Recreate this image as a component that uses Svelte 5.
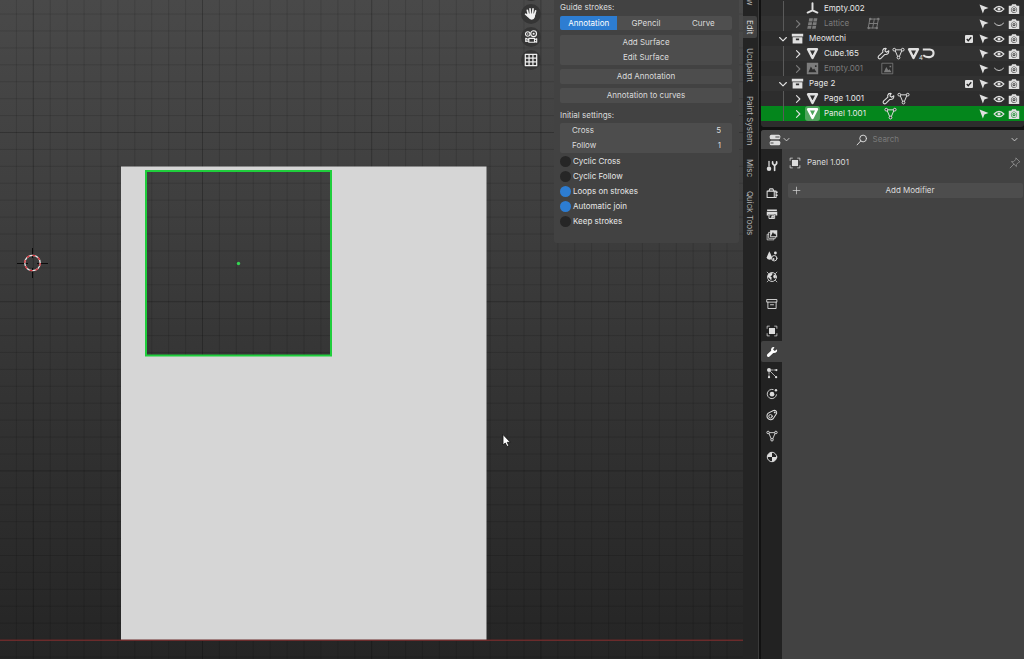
<script>
	// 3D viewport with sidebar on the left, outliner and properties on the right

	const line = 'fill="none" stroke="currentColor" stroke-linecap="round" stroke-linejoin="round"';

	// every icon is drawn on a 16x16 grid
	const icons = {
		zoom: `<circle cx="7" cy="6" r="5" ${line}/>`,
		hand: `<path ${line} stroke-width="1.9" d="M5 8.5L3.8 3.7M7.3 7.5L6.9 2M9.8 7.5L10.3 2.2M12 8.5L13.3 4.3M4.8 10.8L1.8 8.2"/><path fill="currentColor" d="M4 7.5h9l-.6 4.3q-.8 2.8-3.6 2.8-2.5-.2-4-2.6L3 9.5z"/>`,
		movie: `<g ${line} stroke-width="1.3"><circle cx="4.3" cy="4.6" r="2.6"/><circle cx="11" cy="4.2" r="3.3"/><path d="M5.5 9.5h6.500v4.500H5.500zM5.500 11.200L2 9.500v3.500l3.500-.5M12 11l2.500-1v4L12 13"/></g><circle cx="4.300" cy="4.600" r=".8" fill="currentColor"/><circle cx="11" cy="4.200" r="1.200" fill="currentColor"/>`,
		grid: `<path ${line} stroke-width="1.4" d="M1.500 1.500h13v13h-13zM1.500 5.800h13M1.500 10.200h13M5.800 1.500v13M10.200 1.500v13"/>`,
		right: `<path ${line} stroke-width="1.5" d="M6 3.500L10.500 8 6 12.500"/>`,
		down: `<path ${line} stroke-width="1.5" d="M3.500 6L8 10.500 12.500 6"/>`,
		empty: `<path ${line} stroke-width="2.4" d="M8 1.500v8.500M8 10.200L2 13M8 10.200l6 2.800"/>`,
		lattice: `<path fill="currentColor" d="M4 1.500h4.500L8 5.500H3.300zM9.500 1.500H14l-.7 4H9zM3 6.500h4.500L7 10H2.400zM8.700 6.500h4.500l-.6 3.500H8zM2.200 11h4.500l-.5 3.500H1.500zM8 11h4.500l-.7 3.500H7.400z"/>`,
		latticeData: `<path ${line} stroke-width="1.2" d="M4 2.500h10l-2 11H2zM3 8h10M9 2.500L7 13.500"/><g fill="currentColor"><circle cx="4" cy="2.500" r="1.500"/><circle cx="14" cy="2.500" r="1.500"/><circle cx="2" cy="13.500" r="1.500"/><circle cx="12" cy="13.500" r="1.500"/></g>`,
		collection: `<path fill="currentColor" fill-rule="evenodd" d="M1 2h14v3.500H1zM2 6.500h12V14H2zM6 8v2h4V8z"/>`,
		archive: `<path ${line} stroke-width="1.2" d="M1.500 2h13v3.500h-13zM2.500 5.500v8.500h11V5.500M6 9h4"/>`,
		mesh: `<path ${line} stroke-width="3" d="M2.500 2.800h11L8 13.500z"/>`,
		meshData: `<path ${line} stroke-width="1.200" d="M3.500 3.500h9M12.500 3.500L8.500 13h-1L3.500 3.500"/><g fill="#2e2e2e" stroke="currentColor" stroke-width="1.200"><circle cx="2.800" cy="3.300" r="1.700"/><circle cx="13.200" cy="3.300" r="1.700"/><circle cx="8" cy="13" r="1.700"/></g>`,
		image: `<path fill="currentColor" fill-rule="evenodd" d="M1 1h14v14H1zM3 12.500h10L10 8 8.500 9.500 6 5.500zM11 4v2h2V4z"/>`,
		imageData: `<path ${line} d="M1.500 1.500h13v13h-13z"/><path fill="currentColor" d="M3.500 12.500h9.500L10.500 9 9 10 6.500 6zM10.500 4.500h2v2h-2z"/>`,
		wrench: `<path ${line} stroke-width="1.3" d="M14.500 4.500l-2.600 2-2.200-1.700L11.300 1.800Q7.800 1.200 7 4.200L7.200 6.300 1.800 11.300Q.8 13 2.200 14.200q1.400 1 2.600-.3L9.700 9.200Q15 9.600 14.500 4.500z"/>`,
		wrenchSolid: `<path fill="currentColor" d="M14.700 4.300l-3 2.300-2.300-2L11.300 1.600Q7.600.7 6.700 4.300L6.900 6.300 1.700 11Q.5 12.700 2 14.200q1.600 1.200 3.100-.4L9.700 9.300Q15.600 9.600 14.700 4.300z"/>`,
		hook: `<path fill="none" stroke="currentColor" stroke-width="2.6" d="M1 3h8.500q4.700.3 4.700 4.500T9.500 12.500H7.500Q4 12.500 1.500 10"/>`,
		pointer: `<path fill="currentColor" d="M2 2l12 4.500-5.500 2L6.500 14z"/>`,
		eye: `<path ${line} stroke-width="1.6" d="M1.500 8Q8 .8 14.500 8 8 15.200 1.500 8z"/><circle cx="8" cy="8" r="2.100" fill="currentColor"/>`,
		closed: `<path ${line} stroke-width="1.2" d="M2 7q6 6.500 12 0"/>`,
		camera: `<path fill="currentColor" fill-rule="evenodd" d="M1 3.500h3.500l1-2h5l1 2H15v11H1zM8 4.800a4.100 4.100 0 1 0 .01 0z"/><circle cx="8" cy="8.900" r="2.700" ${line} stroke-width="1.5"/><circle cx="8" cy="8.900" r=".9" fill="currentColor"/>`,
		editor: `<rect x="1" y="1" width="14" height="6" rx="2" fill="currentColor"/><rect x="1" y="9" width="14" height="6" rx="2" fill="currentColor"/><path stroke="#484848" stroke-width="1.5" d="M8.500 4H14M2 12h4"/>`,
		search: `<circle cx="9.500" cy="6" r="4.500" ${line} stroke-width="1.3"/><path ${line} stroke-width="1.3" d="M6.300 9.300L1.500 14.500"/>`,
		pin: `<path ${line} stroke-width="1.2" d="M9.500 1.500l5 5-1.700.5-3 3 .1 2.800L3.200 6.200l2.800.1 3-3zM6.500 9.500L1.500 14.500"/>`,
		plus: `<path ${line} stroke-width="1.2" d="M8 2v12M2 8h12"/>`,
		object: `<path fill="currentColor" d="M4 4h8v8H4z"/><path ${line} d="M1.500 4.500v-3h3M11.500 1.500h3v3M14.500 11.500v3h-3M4.500 14.500h-3v-3"/>`,
		tool: `<path ${line} stroke-width="1.7" d="M4 2v6"/><circle cx="4" cy="11.500" r="3" fill="currentColor"/><path ${line} stroke-width="2.200" d="M11.500 7.500V14M8.800 2.500v2.300l2.700 2.700 2.700-2.700V2.500"/>`,
		render: `<path ${line} stroke-width="1.4" d="M1.500 5.500h9.500v8.500H1.500zM4 5l1-2.500h4L10.500 5M13.500 5.500v8.500H11V5.500z"/><path fill="currentColor" d="M13 6h2.500v2H13zM13 10h2.500v2H13z"/>`,
		output: `<path fill="currentColor" d="M1.500 2h13v2h-13zM1 5h14v5h-2.500V8h-9v2H1z"/><path ${line} stroke-width="1.3" d="M4.500 9h7v5h-7z"/><path fill="currentColor" d="M8 10h2.500v3H6z"/>`,
		layers: `<path ${line} d="M3.500 7H1.500v7.500h9V13M5.500 4.500h-2v8h9v-2"/><path fill="currentColor" fill-rule="evenodd" d="M5.500 1.500h9.500v9.500H5.500zM6.500 9.500h7.500L12 5.500 10.800 7 9.300 4z"/>`,
		scene: `<path fill="currentColor" d="M4.500 1.500l3.500 8q-.2 3.300-3.500 3.500Q1 12.700 1 9.500z"/><circle cx="11" cy="11" r="3.600" ${line} stroke-width="1.3"/><circle cx="10" cy="12" r="1.300" fill="currentColor"/><circle cx="12.500" cy="4" r="1.900" fill="currentColor"/>`,
		world: `<circle cx="8" cy="8" r="6" ${line} stroke-width="1.2"/><path fill="currentColor" d="M2.800 5L6 2.500l2.800.5L8 5.500 5.800 7l1.800 1.800-.6 3.700L4.800 10 2.500 8zM10.500 4.500l2.500.8.3 3.200-2 1.500L9.500 8z"/><path ${line} d="M1.500 1.500l2 2M12.500 12.500l2 2M14.500 1.500l-2 2M3.500 12.500l-2 2"/>`,
		particles: `<circle cx="4" cy="4" r="2.700" fill="currentColor"/><path ${line} stroke-dasharray="2 1.500" d="M4 7v6M7 4h7"/><path ${line} d="M6 6l7 7"/><g fill="currentColor"><circle cx="4" cy="13.500" r="1.500"/><circle cx="13.500" cy="13.500" r="1.500"/><circle cx="13.800" cy="4" r="1.500"/></g>`,
		physics: `<path ${line} stroke-width="1.2" d="M9.500 2A6.200 6.200 0 1 0 14 9"/><circle cx="8" cy="8.200" r="3.100" fill="currentColor"/><circle cx="13.300" cy="3" r="1.600" fill="currentColor"/>`,
		constraint: `<path ${line} stroke-width="1.4" d="M3 5.500L10 2q3-.8 4 1.500.8 2-.5 3.500L9.500 13A4.800 4.800 0 1 1 3 5.500z"/><circle cx="6" cy="9.700" r="2.300" ${line} stroke-width="1.3"/><circle cx="11.700" cy="4.500" r="1.300" fill="currentColor"/>`,
		material: `<circle cx="8" cy="8" r="6.300" ${line} stroke-width="1.3"/><path fill="currentColor" d="M8 1.700V8h6.300A6.300 6.300 0 0 1 8 14.300V8H1.700A6.300 6.300 0 0 1 8 1.700z"/>`
	};

	const rows = [
		{ name: 'Empty.002', level: 1, icon: 'empty', leaf: true, extras: [] },
		{ name: 'Lattice', level: 1, icon: 'lattice', hidden: true, extras: ['latticeData'] },
		{ name: 'Meowtchi', level: 0, icon: 'collection', extras: [] },
		{ name: 'Cube.165', level: 1, icon: 'mesh', extras: ['wrench', 'meshData', 'mesh', 'hook'] },
		{ name: 'Empty.001', level: 1, icon: 'image', hidden: true, extras: ['imageData'] },
		{ name: 'Page 2', level: 0, icon: 'collection', extras: [] },
		{ name: 'Page 1.001', level: 1, icon: 'mesh', extras: ['wrench', 'meshData'] },
		{ name: 'Panel 1.001', level: 1, icon: 'mesh', selected: true, extras: ['meshData'] }
	];

	const propertyTabs = [
		['tool'],
		['render', 'output', 'layers', 'scene', 'world'],
		['archive'],
		['object', 'wrenchSolid', 'particles', 'physics', 'constraint', 'meshData', 'material']
	];

	const sidebarTabs = ['View', 'Edit', 'Ucupaint', 'Paint System', 'Misc', 'Quick Tools'];
	const modes = ['Annotation', 'GPencil', 'Curve'];

	let sidebarTab = $state('Edit');
	let propertyTab = $state('wrenchSolid');
	let mode = $state('Annotation');
	let settings = $state([
		{ name: 'Cross', value: 5 },
		{ name: 'Follow', value: 1 }
	]);
	let options = $state([
		{ name: 'Cyclic Cross', on: false },
		{ name: 'Cyclic Follow', on: false },
		{ name: 'Loops on strokes', on: true },
		{ name: 'Automatic join', on: true },
		{ name: 'Keep strokes', on: false }
	]);

	// floor grid, one major line every ten cells
	const cell = 16.92;
	const gridLines = Array.from({ length: 160 }, (_, i) => i - 40);
</script>

{#snippet icon(name)}
	<svg class="icon" viewBox="0 0 16 16" aria-hidden="true">{@html icons[name]}</svg>
{/snippet}

<div class="window">
	<main class="viewport">
		<svg class="canvas" aria-hidden="true">
			{#each gridLines as n (n)}
				<line
					class={n % 10 === 0 ? 'major' : 'minor'}
					x1={33.3 + n * cell}
					x2={33.3 + n * cell}
					y1="0"
					y2="100%"
				/>
				<line
					class={n % 10 === 0 ? 'major' : 'minor'}
					x1="0"
					x2="100%"
					y1={132.5 + n * cell}
					y2={132.5 + n * cell}
				/>
			{/each}
			<path class="page" d="M121 166.500H486.500V640H121zM146 171V355.500H331V171z" />
			<rect class="panel-outline" x="146" y="171" width="185" height="184.500" />
			<circle cx="238.500" cy="263.500" r="1.700" fill="#35d552" />
			<path stroke="#6b2b2b" stroke-width="1.500" d="M0 640.200H2000" />
			<g fill="none">
				<path stroke="#0c0c0c" d="M17 263.500h11M37 263.500h11M32.500 248v10M32.500 268v10" />
				<circle cx="32.500" cy="263" r="7.700" stroke="#e8e8e8" stroke-width="1.300" />
				<circle cx="32.500" cy="263" r="7.700" stroke="#d8343c" stroke-width="1.300" stroke-dasharray="3 3" />
			</g>
			<path
				fill="#fff"
				stroke="#111"
				stroke-width=".8"
				d="M503 434.500v10.500l2.300-2 1.700 3.500 1.800-.8-1.600-3.400h3.200z"
			/>
		</svg>

		<div class="overlay">
			<nav class="gizmos" aria-label="Navigate">
				{#each ['zoom', 'hand', 'movie', 'grid'] as name (name)}
					<button class="gizmo" aria-label={name}>{@render icon(name)}</button>
				{/each}
			</nav>

			<section class="sidebar">
				<h2>Guide strokes:</h2>
				<div class="modes">
					{#each modes as item (item)}
						<button class:active={mode === item} onclick={() => (mode = item)}>{item}</button>
					{/each}
				</div>
				<div class="stack">
					<button>Add Surface</button>
					<button>Edit Surface</button>
				</div>
				<div class="stack"><button>Add Annotation</button></div>
				<div class="stack"><button>Annotation to curves</button></div>
				<h2>Initial settings:</h2>
				<div class="fields">
					{#each settings as item (item.name)}
						<label>
							<span>{item.name}</span>
							<input type="text" inputmode="numeric" bind:value={item.value} />
						</label>
					{/each}
				</div>
				{#each options as item (item.name)}
					<label class="option">
						<input type="checkbox" bind:checked={item.on} />
						{item.name}
					</label>
				{/each}
			</section>

			<div class="side-tabs">
				{#each sidebarTabs as tab (tab)}
					<button class:active={sidebarTab === tab} onclick={() => (sidebarTab = tab)}>{tab}</button>
				{/each}
			</div>
		</div>
	</main>

	<aside class="right">
		<ul class="outliner">
			{#each rows as row (row.name)}
				<li class:child={row.level === 1} class:hidden={row.hidden} class:selected={row.selected}>
					<button class="cell toggle" class:leaf={row.leaf} aria-label="Expand {row.name}">
						{@render icon(row.level ? 'right' : 'down')}
					</button>
					<span class="cell type">{@render icon(row.icon)}</span>
					<span class="name">{row.name}</span>
					<span class="extras">
						{#each row.extras as extra (extra)}
							<span class="cell">
								{@render icon(extra)}
								{#if extra === 'mesh'}<small>4</small>{/if}
							</span>
						{/each}
					</span>
					{#if row.level === 0}
						<label class="cell check">
							<input type="checkbox" checked aria-label="Include {row.name}" />
							<svg viewBox="0 0 16 16" aria-hidden="true">
								<path fill="none" stroke="#222" stroke-width="2.500" d="M3.500 8l3 3.500L12.500 4.500" />
							</svg>
						</label>
					{/if}
					<button class="cell" aria-label="Selectable">{@render icon('pointer')}</button>
					<button class="cell" aria-label="Show in viewport">
						{@render icon(row.hidden ? 'closed' : 'eye')}
					</button>
					<button class="cell" aria-label="Show in render">{@render icon('camera')}</button>
				</li>
			{/each}
		</ul>

		<section class="properties">
			<header>
				<button class="editor" aria-label="Editor type">
					{@render icon('editor')}
					{@render icon('down')}
				</button>
				<label class="search">
					{@render icon('search')}
					<input type="text" placeholder="Search" aria-label="Search" />
				</label>
				<button class="more" aria-label="Options">{@render icon('down')}</button>
			</header>
			<div class="body">
				<nav class="tabs" aria-label="Properties">
					{#each propertyTabs as group}
						<div>
							{#each group as tab (tab)}
								<button
									class:active={propertyTab === tab}
									aria-label={tab}
									onclick={() => (propertyTab = tab)}
								>
									{@render icon(tab)}
								</button>
							{/each}
						</div>
					{/each}
				</nav>
				<div class="content">
					<div class="context">
						{@render icon('object')}
						<span>Panel 1.001</span>
						<button aria-label="Pin">{@render icon('pin')}</button>
					</div>
					<button class="add">
						{@render icon('plus')}
						<span>Add Modifier</span>
					</button>
				</div>
			</div>
		</section>
	</aside>
</div>

<style>
	:global(body) {
		margin: 0;
		background: #111;
	}

	.window {
		display: flex;
		gap: 2px;
		min-height: 100vh;
		overflow: hidden;
		background: #111;
		color: #dcdcdc;
		font: 8px/15px Inter, 'Noto Sans', sans-serif;
	}

	button,
	input {
		margin: 0;
		padding: 0;
		border: 0;
		background: none;
		color: inherit;
		font: inherit;
	}

	.icon {
		display: block;
		flex: none;
		width: 12px;
		height: 12px;
	}

	/* viewport */
	.viewport {
		position: relative;
		flex: 1;
		min-width: 0;
		overflow: hidden;
		border-right: 1px solid #3a3a3a;
		background: linear-gradient(#494949, #3f3f3f 30%, #353535 55%, #2a2a2a 85%, #252525);
	}

	.canvas {
		position: absolute;
		inset: 0;
		width: 100%;
		height: 100%;
	}

	.minor {
		stroke: #000;
		stroke-opacity: 0.12;
	}

	.major {
		stroke: #000;
		stroke-opacity: 0.24;
	}

	.page {
		fill: #d6d6d6;
		fill-rule: evenodd;
	}

	.panel-outline {
		fill: none;
		stroke: #1fce3c;
		stroke-width: 2;
	}

	.overlay {
		position: absolute;
		inset: 0;
		display: flex;
		align-items: flex-start;
		justify-content: flex-end;
	}

	.gizmos {
		display: flex;
		flex-direction: column;
		gap: 3px;
		margin: -19px 13px 0 0;
	}

	.gizmo {
		display: grid;
		place-items: center;
		width: 20px;
		height: 20px;
		border-radius: 50%;
		background: #353535;
		color: #f0f0f0;
	}

	.gizmo .icon {
		width: 14px;
		height: 14px;
	}

	.sidebar {
		box-sizing: border-box;
		width: 185px;
		margin-right: 4px;
		padding: 0 7px 14px 6px;
		border-radius: 0 0 3px 3px;
		background: #424242;
	}

	h2 {
		margin: 0;
		font-size: 8px;
		font-weight: 400;
	}

	.modes {
		display: grid;
		grid-template-columns: repeat(3, 1fr);
		margin: 1px 0 5px;
		overflow: hidden;
		border-radius: 2px;
		background: #4f4f4f;
	}

	.modes button {
		height: 14px;
		line-height: 14px;
	}

	.modes .active {
		background: #2d7dd2;
		color: #fff;
	}

	.stack {
		margin-bottom: 4px;
		border-radius: 2px;
		background: #4d4d4d;
	}

	.stack button {
		display: block;
		width: 100%;
		height: 15px;
	}

	.stack + h2 {
		margin-top: 5px;
	}

	.fields {
		margin-bottom: 1px;
		border-radius: 2px;
		background: #4d4d4d;
	}

	.fields label {
		display: flex;
		justify-content: space-between;
		height: 15px;
		padding: 0 11px 0 12px;
	}

	.fields input {
		width: 40px;
		text-align: right;
	}

	.option {
		display: flex;
		align-items: center;
		gap: 2px;
		height: 15px;
		color: #e8e8e8;
	}

	.option input {
		width: 11px;
		height: 11px;
		border-radius: 50%;
		background: #262626;
		appearance: none;
	}

	.option input:checked {
		background: #2d7dd2;
	}

	.side-tabs {
		display: flex;
		align-self: stretch;
		flex-direction: column;
		gap: 6px;
		box-sizing: border-box;
		width: 15px;
		overflow: hidden;
		background: #242424;
	}

	.side-tabs button {
		flex: none;
		width: 14px;
		padding: 4px 0;
		border-radius: 0 2px 2px 0;
		color: #b4b4b4;
		line-height: 14px;
		writing-mode: vertical-rl;
	}

	.side-tabs button:first-child {
		margin-top: -17px;
	}

	.side-tabs .active {
		background: #424242;
		color: #dcdcdc;
	}

	/* outliner */
	.right {
		display: flex;
		flex-direction: column;
		gap: 3px;
		width: 263px;
	}

	.outliner {
		margin: 0;
		padding: 1px 0 6px;
		border-radius: 0 0 3px 3px;
		background: #2d2d2d;
		list-style: none;
	}

	.outliner li {
		display: flex;
		align-items: center;
		height: 15px;
		padding: 0 3px 0 14px;
	}

	.outliner li:nth-child(even) {
		background-color: #323232;
	}

	.outliner li.child {
		padding-left: 29px;
		background-image: linear-gradient(#5a5a5a, #5a5a5a);
		background-position: 22px 0;
		background-repeat: no-repeat;
		background-size: 1px 100%;
	}

	.outliner li.selected {
		background-color: #04861c;
	}

	.outliner .toggle,
	.outliner .type,
	.outliner .cell {
		color: #e0e0e0;
	}

	.cell {
		display: grid;
		position: relative;
		place-items: center;
		flex: none;
		width: 15px;
		height: 15px;
	}

	.leaf {
		visibility: hidden;
	}

	.type .icon,
	.extras .icon {
		width: 13px;
		height: 13px;
	}

	.outliner .selected .type {
		border-radius: 3px;
		background: #4fa35c;
		color: #fff;
	}

	.name {
		margin: 0 17px 0 4px;
		color: #e8e8e8;
	}

	.outliner .hidden .toggle,
	.outliner .hidden .type,
	.outliner .hidden .extras .cell,
	.hidden .name {
		color: #7c7c7c;
	}

	.extras {
		display: flex;
		flex: 1;
	}

	small {
		position: absolute;
		right: -2px;
		bottom: -1px;
		font-size: 6px;
		line-height: 8px;
	}

	.check input {
		width: 8px;
		height: 8px;
		border-radius: 1px;
		background: #8a8a8a;
		appearance: none;
	}

	.check input:checked {
		background: #e0e0e0;
	}

	.check svg {
		position: absolute;
		width: 8px;
		height: 8px;
		pointer-events: none;
	}

	/* properties */
	.properties {
		display: flex;
		flex: 1;
		flex-direction: column;
		overflow: hidden;
		border-radius: 3px 0 0 0;
		background: #424242;
	}

	header {
		display: grid;
		grid-template-columns: 1fr auto 1fr;
		align-items: center;
		height: 19px;
		padding: 0 5px 0 8px;
		background: #484848;
	}

	.editor {
		display: flex;
		align-items: center;
		gap: 1px;
	}

	.editor .icon + .icon,
	.more .icon {
		width: 9px;
		height: 9px;
	}

	.search {
		display: flex;
		align-items: center;
		gap: 5px;
	}

	.search input {
		width: 60px;
	}

	.search input::placeholder {
		color: #7a7a7a;
		opacity: 1;
	}

	.more {
		justify-self: end;
	}

	.body {
		display: flex;
		flex: 1;
	}

	.tabs {
		display: flex;
		flex-direction: column;
		gap: 6px;
		width: 21px;
		padding-top: 6px;
		background: #222;
	}

	.tabs button {
		display: grid;
		place-items: center;
		width: 21px;
		height: 21px;
	}

	.tabs .active {
		border-radius: 2px 0 0 2px;
		background: #424242;
		color: #fff;
	}

	.content {
		flex: 1;
		padding: 6px 1px 0 6px;
	}

	.context {
		display: flex;
		align-items: center;
		gap: 6px;
		height: 15px;
		padding: 0 2px 0 1px;
	}

	.context button {
		margin-left: auto;
		color: #8c8c8c;
	}

	.add {
		display: flex;
		align-items: center;
		width: 100%;
		height: 15px;
		margin-top: 13px;
		padding: 0 4px;
		border-radius: 2px;
		background: #4d4d4d;
	}

	.add .icon {
		width: 9px;
		height: 9px;
	}

	.add span {
		flex: 1;
	}
</style>
